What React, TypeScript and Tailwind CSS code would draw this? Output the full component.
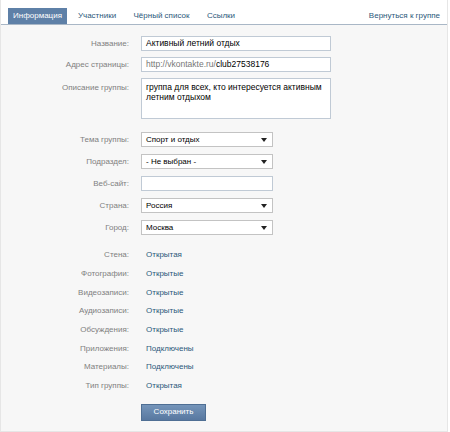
import React from 'react';

const labelCls = 'w-[128px] shrink-0 text-right text-[#808080]';

function Arrow() {
  return (
    <svg width="6" height="4" viewBox="0 0 6 4" className="absolute right-[5px] top-[5px]">
      <path d="M0 0h6L3 4z" fill="#222" />
    </svg>
  );
}

function SelectBox({ value }: { value: string }) {
  return (
    <div className="relative h-[15px] w-[132px] border border-[#c3c3c3] bg-white pl-[4px] text-[8px] leading-[13px] text-black">
      {value}
      <Arrow />
    </div>
  );
}

function FieldRow({ label, children, top = false }: { label: string; children: React.ReactNode; top?: boolean }) {
  return (
    <div className={`flex gap-[12px] ${top ? 'items-start' : 'items-center'}`}>
      <div className={`${labelCls} ${top ? 'pt-[4px]' : ''}`}>{label}</div>
      {children}
    </div>
  );
}

const settings: [string, string][] = [
  ['Стена:', 'Открытая'],
  ['Фотографии:', 'Открытые'],
  ['Видеозаписи:', 'Открытые'],
  ['Аудиозаписи:', 'Открытые'],
  ['Обсуждения:', 'Открытые'],
  ['Приложения:', 'Подключены'],
  ['Материалы:', 'Подключены'],
  ['Тип группы:', 'Открытая'],
];

export default function App() {
  return (
    <div
      className="h-[432px] w-[450px] bg-white text-[8px]"
      style={{ fontFamily: '"Liberation Sans", Arial, sans-serif' }}
    >
      <div className="w-[448px] border-b border-r border-l border-[#e6e6e6]">
        {/* tabs */}
        <div className="flex h-[25px] items-end border-b border-[#a9b7c6] bg-white pl-[7px] pr-[7px]">
          <div className="flex h-[16px] w-[59px] items-center justify-center bg-[#5e80a7] text-white">Информация</div>
          <div className="ml-[2px] flex h-[16px] w-[56px] items-center justify-center text-[#2b587a]">Участники</div>
          <div className="ml-[2px] flex h-[16px] w-[69px] items-center justify-center text-[#2b587a]">Чёрный список</div>
          <div className="ml-[2px] flex h-[16px] w-[46px] items-center justify-center text-[#2b587a]">Ссылки</div>
          <div className="ml-auto flex h-[16px] items-center text-[#2b587a]">Вернуться к группе</div>
        </div>

        {/* body */}
        <div className="bg-[#f7f7f7] pt-[11px] pb-[10px]">
          <div className="flex flex-col gap-[6px]">
            <FieldRow label="Название:">
              <div className="h-[15px] w-[190px] border border-[#c0cad5] bg-white pl-[4px] text-[8.5px] leading-[13px] text-black">
                Активный летний отдых
              </div>
            </FieldRow>
            <FieldRow label="Адрес страницы:">
              <div className="h-[15px] w-[190px] border border-[#c0cad5] bg-white pl-[4px] text-[8.5px] leading-[13px] text-black">
                <span className="text-[#777]">http://vkontakte.ru/</span>club27538176
              </div>
            </FieldRow>
            <FieldRow label="Описание группы:" top>
              <div className="h-[41px] w-[190px] whitespace-nowrap border border-[#c0cad5] bg-white pl-[4px] pt-[3px] text-[8.5px] leading-[10px] text-black">
                группа для всех, кто интересуется активным
                <br />
                летним отдыхом
              </div>
            </FieldRow>
          </div>

          <div className="mt-[13px] flex flex-col gap-[7px]">
            <FieldRow label="Тема группы:">
              <SelectBox value="Спорт и отдых" />
            </FieldRow>
            <FieldRow label="Подраздел:">
              <SelectBox value="- Не выбран -" />
            </FieldRow>
            <FieldRow label="Веб-сайт:">
              <div className="h-[15px] w-[132px] border border-[#c0cad5] bg-white" />
            </FieldRow>
            <FieldRow label="Страна:">
              <SelectBox value="Россия" />
            </FieldRow>
            <FieldRow label="Город:">
              <SelectBox value="Москва" />
            </FieldRow>
          </div>

          <div className="mt-[11px] flex flex-col">
            {settings.map(([label, value]) => (
              <div key={label} className="flex h-[18.7px] items-center gap-[12px]">
                <div className={labelCls}>{label}</div>
                <div className="pl-[5px] text-[#2b587a]">{value}</div>
              </div>
            ))}
          </div>

          <div className="mt-[8px] pl-[140px]">
            <button className="h-[17px] w-[65px] border border-[#4f6f94] bg-gradient-to-b from-[#7595ba] to-[#5878a0] text-[8px] text-white">
              Сохранить
            </button>
          </div>
        </div>
      </div>
    </div>
  );
}
